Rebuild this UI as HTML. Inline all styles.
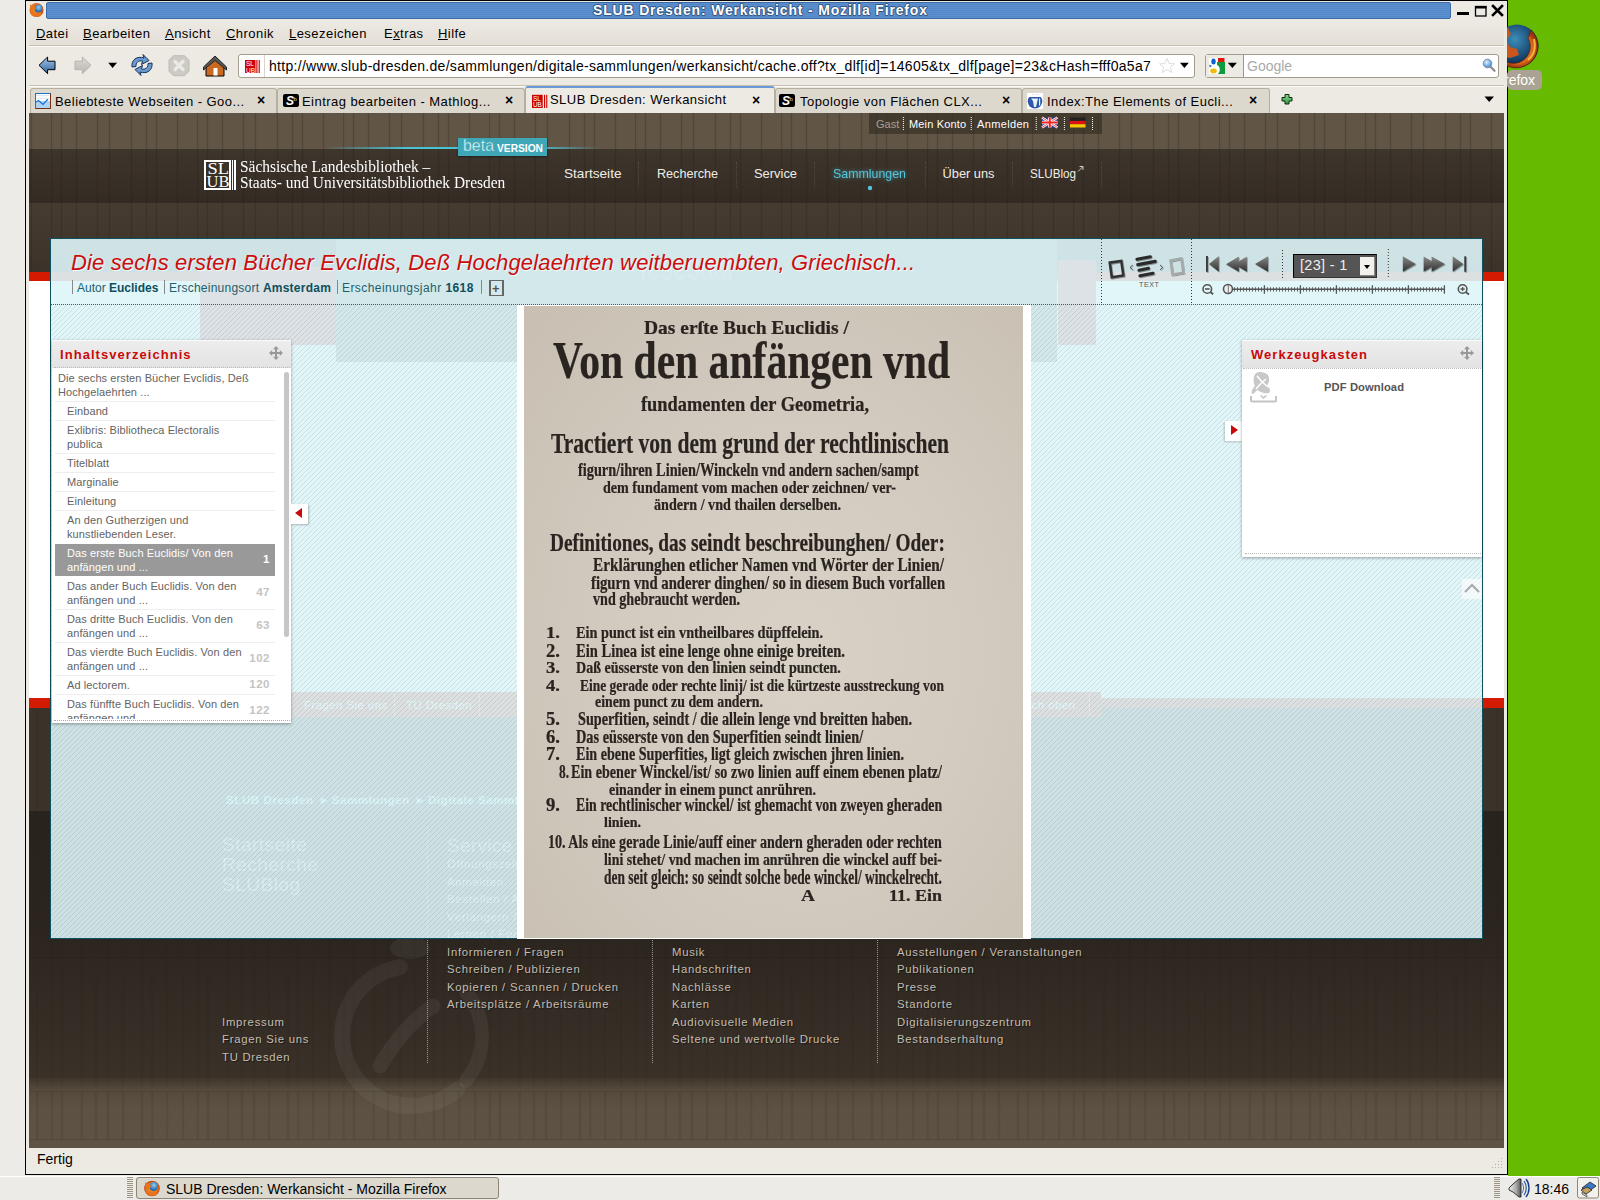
<!DOCTYPE html>
<html><head><meta charset="utf-8">
<style>
*{margin:0;padding:0;box-sizing:border-box}
html,body{width:1600px;height:1200px;overflow:hidden;background:#edebe7;font-family:"Liberation Sans",sans-serif}
.a{position:absolute}
.ui{font-size:14px;color:#000;white-space:nowrap}
#green{left:1508px;top:0;width:92px;height:1176px;background:#66ba00}
#win{left:25px;top:0;width:1483px;height:1175px;background:#edeae4;border:1px solid #000;border-width:1px 1px 1px 1px}
#title{left:46px;top:2px;width:1405px;height:17px;border-radius:2px;border:1px solid #3c6aa5;
 background:repeating-linear-gradient(180deg,#5d8fcf 0,#5d8fcf 1px,#5289c9 1px,#5289c9 2px)}
#titletext{left:0;top:1px;width:1405px;text-align:center;color:#fff;font-weight:bold;font-size:14px;letter-spacing:0.6px;text-shadow:0 0 2px #1e3a60}
.sep{height:2px;background:#c9c0b0;border-bottom:1px solid #fbfaf8}
.tab{top:88px;height:25px;background:#ddd8ce;border:1px solid #b6ae9f;border-bottom:none;border-radius:3px 3px 0 0}
.tabtxt{top:4.8px;left:24px;font-size:13px;letter-spacing:0.45px;white-space:nowrap}
.tabx{top:3px;font-size:14px;font-weight:bold}
#content{left:29px;top:113px;width:1475px;height:1035px;overflow:hidden;background:#3f362c}
.wood{background-image:
 linear-gradient(90deg,transparent -0.8px,rgba(35,28,20,.26) 0.5px,transparent 1.8px),
 linear-gradient(90deg,transparent 9.2px,rgba(35,28,20,.26) 10.5px,transparent 11.8px),
 linear-gradient(90deg,transparent 24.2px,rgba(35,28,20,.26) 25.5px,transparent 26.8px),
 linear-gradient(90deg,transparent 45.2px,rgba(35,28,20,.26) 46.5px,transparent 47.8px),
 linear-gradient(90deg,transparent 57.2px,rgba(35,28,20,.26) 58.5px,transparent 59.8px),
 linear-gradient(90deg,transparent 79.2px,rgba(35,28,20,.26) 80.5px,transparent 81.8px),
 linear-gradient(90deg,transparent 94.2px,rgba(35,28,20,.26) 95.5px,transparent 96.8px),
 linear-gradient(90deg,transparent 104.2px,rgba(35,28,20,.26) 105.5px,transparent 106.8px),
 linear-gradient(90deg,transparent 125.2px,rgba(35,28,20,.26) 126.5px,transparent 127.8px);
 background-size:146px 100%;background-position:22px 0}
#status{left:29px;top:1148px;width:1475px;height:24px}
#taskbar{left:0;top:1176px;width:1600px;height:24px;background:#edebe7;border-top:1px solid #fff}

.serif{font-family:"Liberation Serif",serif}
.um{top:117.5px;font-size:11px;color:#fff;white-space:nowrap}
.nav{top:165px;font-size:13.4px;color:#f2efe8;white-space:nowrap;letter-spacing:0.2px}
.dsep{top:162px;height:26px;width:1px;border-left:1px dotted rgba(255,255,255,.12)}
.fcol{font-size:11.3px;line-height:17.55px;color:#c4bdb2;letter-spacing:0.75px;white-space:nowrap;text-shadow:1px 1px 1px rgba(0,0,0,.5)}
.fsep{top:827px;height:236px;width:1px;border-left:1px dotted rgba(255,255,255,.5)}

.metat{top:281.4px;font-size:12px;color:#1d5f6e;white-space:nowrap}
.metat b{color:#0f4f5e}
.panel{background:#fff;box-shadow:0 1px 3px rgba(0,0,0,.35)}
.phead{background:linear-gradient(#ededed,#e3e3e3);border-top:1px solid #fafafa}
.ptitle{font-size:13px;font-weight:bold;color:#c80a0a;letter-spacing:1.05px;white-space:nowrap}
.bl{position:absolute;white-space:pre;line-height:1;color:#2a2420;-webkit-text-stroke:0.2px #2a2420;transform-origin:0 0;font-family:"Liberation Serif",serif}

.li{font-size:11px;line-height:14px;color:#636363;letter-spacing:0.1px;white-space:nowrap}
.lsep{left:55px;width:220px;height:1px;background:#eee}
.lnum{left:54px;width:216px;text-align:right;font-size:11.5px;font-weight:bold;color:#c4c4c4;letter-spacing:0.5px}
.fm{top:699px;font-size:11.5px;color:#fff;white-space:nowrap;letter-spacing:0.4px}
.bleed{position:absolute;left:40px;width:440px;text-align:right;font-family:"Liberation Serif",serif;font-weight:bold;font-size:17px;color:rgba(60,50,40,.05);white-space:nowrap;transform:scaleX(-1)}
.wood2{background-image:
 linear-gradient(90deg,transparent -0.8px,rgba(35,28,20,.26) 0.5px,transparent 1.8px),
 linear-gradient(90deg,transparent 14.0px,rgba(35,28,20,.26) 15.3px,transparent 16.6px),
 linear-gradient(90deg,transparent 24.3px,rgba(35,28,20,.26) 25.6px,transparent 26.9px),
 linear-gradient(90deg,transparent 44.0px,rgba(35,28,20,.26) 45.3px,transparent 46.6px),
 linear-gradient(90deg,transparent 58.1px,rgba(35,28,20,.26) 59.4px,transparent 60.7px),
 linear-gradient(90deg,transparent 70.3px,rgba(35,28,20,.26) 71.6px,transparent 72.9px),
 linear-gradient(90deg,transparent 85.3px,rgba(35,28,20,.26) 86.6px,transparent 87.9px),
 linear-gradient(90deg,transparent 104.1px,rgba(35,28,20,.26) 105.4px,transparent 106.7px),
 linear-gradient(90deg,transparent 114.4px,rgba(35,28,20,.26) 115.7px,transparent 117.0px),
 linear-gradient(90deg,transparent 129.4px,rgba(35,28,20,.26) 130.7px,transparent 132.0px);
 background-size:146px 100%;background-position:7.5px 0}
</style></head><body>
<div id="green" class="a"></div>
<div id="win" class="a"></div>
<!-- title bar -->
<div id="title" class="a"></div><svg class="a" style="left:0;top:0" width="1600" height="22"><text x="593" y="15" font-family="Liberation Sans" font-weight="bold" font-size="14" fill="#fff" textLength="334" lengthAdjust="spacing" stroke="#2a4c78" stroke-width="1.6" paint-order="stroke" stroke-linejoin="round">SLUB Dresden: Werkansicht - Mozilla Firefox</text></svg>

<!-- menu -->
<div class="a" style="left:29px;top:20px;width:1475px;height:25px;background:linear-gradient(#edeae4,#e4dfd7)"></div>
<div class="a ui" style="left:36px;top:25.8px;font-size:13px;letter-spacing:0.45px"><u>D</u>atei</div>
<div class="a ui" style="left:83px;top:25.8px;font-size:13px;letter-spacing:0.45px"><u>B</u>earbeiten</div>
<div class="a ui" style="left:165px;top:25.8px;font-size:13px;letter-spacing:0.45px"><u>A</u>nsicht</div>
<div class="a ui" style="left:226px;top:25.8px;font-size:13px;letter-spacing:0.45px"><u>C</u>hronik</div>
<div class="a ui" style="left:289px;top:25.8px;font-size:13px;letter-spacing:0.45px"><u>L</u>esezeichen</div>
<div class="a ui" style="left:384px;top:25.8px;font-size:13px;letter-spacing:0.45px">E<u>x</u>tras</div>
<div class="a ui" style="left:438px;top:25.8px;font-size:13px;letter-spacing:0.45px"><u>H</u>ilfe</div>
<div class="a sep" style="left:29px;top:45px;width:1475px"></div>

<!-- nav toolbar -->
<div class="a" style="left:238px;top:54px;width:957px;height:24px;background:#fff;border:1px solid #a39c8e;border-radius:3px"></div>
<div class="a ui" style="left:269px;top:58px;width:886px;overflow:hidden;letter-spacing:0.3px">http://www.slub-dresden.de/sammlungen/digitale-sammlungen/werkansicht/cache.off?tx_dlf[id]=14605&amp;tx_dlf[page]=23&amp;cHash=fff0a5a7</div>
<div class="a" style="left:1205px;top:54px;width:294px;height:24px;background:#fff;border:1px solid #a39c8e;border-radius:3px"></div>
<div class="a ui" style="left:1247px;top:58px;color:#aaa">Google</div>
<div class="a sep" style="left:29px;top:85px;width:1475px"></div>

<!-- tabs -->
<div class="a tab" style="left:30px;width:247px"><div class="a tabtxt">Beliebteste Webseiten - Goo...</div><div class="a tabx" style="left:226px">×</div></div>
<div class="a tab" style="left:277px;width:248px"><div class="a tabtxt">Eintrag bearbeiten - Mathlog...</div><div class="a tabx" style="left:227px">×</div></div>
<div class="a tab" style="left:525px;top:86px;height:27px;width:250px;background:#edeae4;border-top:2px solid #6a9bd8"><div class="a tabtxt" style="top:3.8px">SLUB Dresden: Werkansicht</div><div class="a tabx" style="left:226px;top:4px">×</div></div>
<div class="a tab" style="left:775px;width:247px"><div class="a tabtxt">Topologie von Flächen CLX...</div><div class="a tabx" style="left:226px">×</div></div>
<div class="a tab" style="left:1022px;width:248px"><div class="a tabtxt">Index:The Elements of Eucli...</div><div class="a tabx" style="left:226px">×</div></div>


<svg class="a" style="left:0;top:0" width="1600" height="120">
 <defs>
  <linearGradient id="gBack" x1="0" y1="0" x2="0" y2="1"><stop offset="0" stop-color="#a9c6e8"/><stop offset=".5" stop-color="#6a95c6"/><stop offset="1" stop-color="#2f5e96"/></linearGradient>
  <linearGradient id="gFwd" x1="0" y1="0" x2="0" y2="1"><stop offset="0" stop-color="#dcdad5"/><stop offset="1" stop-color="#b9b6b0"/></linearGradient>
  <linearGradient id="gPlus" x1="0" y1="0" x2="0" y2="1"><stop offset="0" stop-color="#8fd48f"/><stop offset="1" stop-color="#2f9a3f"/></linearGradient>
  <radialGradient id="gFox" cx=".45" cy=".45" r=".6"><stop offset="0" stop-color="#f6b23a"/><stop offset=".7" stop-color="#e0651a"/><stop offset="1" stop-color="#b33c10"/></radialGradient>
  <radialGradient id="gGlobe" cx=".55" cy=".35" r=".6"><stop offset="0" stop-color="#8fd0f0"/><stop offset="1" stop-color="#1d5fa8"/></radialGradient>
  <radialGradient id="gMag" cx=".4" cy=".35" r=".6"><stop offset="0" stop-color="#dff0ff"/><stop offset="1" stop-color="#4f8fd8"/></radialGradient>
 </defs>
 <!-- title firefox icon -->
 <circle cx="36.5" cy="10" r="7" fill="url(#gFox)"/>
 <circle cx="38.3" cy="8.6" r="4" fill="url(#gGlobe)"/>
 <path d="M30 4 L32 6 L35 5 L36 9 L33 12 L37 14 L41 12 L41 16 L36 17 L31 15 Z" fill="#e8741c" opacity=".9"/>
 <!-- window buttons -->
 <rect x="1457" y="12" width="12" height="3" fill="#000"/>
 <rect x="1475.5" y="6.5" width="10.5" height="9.5" fill="none" stroke="#000" stroke-width="1.3"/>
 <rect x="1475" y="6" width="11.5" height="2.5" fill="#000"/>
 <path d="M1493 6 L1502 15 M1502 6 L1493 15" stroke="#000" stroke-width="2.6" stroke-linecap="square"/>
 <!-- back -->
 <path d="M39 65.3 L47.6 57 L47.6 61.2 L55 61.2 L55 69.7 L47.6 69.7 L47.6 73.7 Z" fill="url(#gBack)" stroke="#000" stroke-width="1" stroke-linejoin="miter"/>
 <!-- forward -->
 <path d="M91 65.3 L82.4 57 L82.4 61.2 L75 61.2 L75 69.7 L82.4 69.7 L82.4 73.7 Z" fill="url(#gFwd)" stroke="#b5b2ac" stroke-width="1"/>
 <path d="M108.2 62.8 L117 62.8 L112.6 68.1 Z" fill="#000"/>
 <!-- reload -->
 <g fill="#6b9ad0" stroke="#14335a" stroke-width="1">
  <path d="M132 67 C131 60 137 55.5 144 58 L143 54.5 L149 60.5 L141.5 64.5 L142.5 61 C139 60 135.5 62.5 136 66.5 Z"/>
  <path d="M152 63 C153 70 147 74.5 140 72 L141 75.5 L135 69.5 L142.5 65.5 L141.5 69 C145 70 148.5 67.5 148 63.5 Z"/>
 </g>
 <!-- stop -->
 <path d="M173.5 55.7 L184.5 55.7 L189 60.2 L189 71.2 L184.5 75.7 L173.5 75.7 L169 71.2 L169 60.2 Z" fill="#cdcac4" stroke="#bdbab4" stroke-width="1"/>
 <path d="M175 61.5 L183 69.5 M183 61.5 L175 69.5" stroke="#eceae6" stroke-width="3.2" stroke-linecap="round"/>
 <!-- home -->
 <path d="M206 66 L206 76 L224 76 L224 66 L215 58 Z" fill="#c96a22" stroke="#000" stroke-width="1"/>
 <path d="M203.5 67 L215 56 L226.5 67 L226.5 70 L215 60.5 L203.5 70 Z" fill="#555" stroke="#222" stroke-width="1"/>
 <rect x="213.5" y="68" width="4" height="7.5" fill="#fff"/>
 <!-- url favicon -->
 <rect x="245" y="60" width="10.5" height="13" fill="#cc0000"/>
 <text x="246" y="66" font-family="Liberation Sans" font-size="6.5" fill="#fff">SL</text>
 <text x="246" y="72.5" font-family="Liberation Sans" font-size="6.5" fill="#fff">UB</text>
 <rect x="256.3" y="60" width="1.2" height="13" fill="#cc0000"/>
 <rect x="258.6" y="60" width="1.2" height="13" fill="#cc0000"/>
 <rect x="264" y="55" width="1" height="22" fill="#d8d4cc"/>
 <!-- star -->
 <path d="M1167 58.5 L1169.2 63.5 L1174.5 63.8 L1170.4 67.2 L1171.8 72.5 L1167 69.6 L1162.2 72.5 L1163.6 67.2 L1159.5 63.8 L1164.8 63.5 Z" fill="none" stroke="#ddd" stroke-width="1"/>
 <path d="M1180 62.8 L1188.8 62.8 L1184.4 68.1 Z" fill="#000"/>
 <!-- search engine -->
 <rect x="1206" y="55" width="37.5" height="22" fill="#edeae4"/>
 <rect x="1243" y="55" width="1" height="22" fill="#9d968a"/>
 <rect x="1209" y="58" width="16" height="16" fill="#fff"/>
 <ellipse cx="1213.5" cy="61.5" rx="2.2" ry="3" fill="#0f5fd0"/>
 <path d="M1218 58 L1224.5 58 L1224.5 62 L1218 62 Z" fill="#e3120b"/>
 <path d="M1217 62 L1225 62 L1225 74 L1218 74 C1221 71 1220 66 1217 65 Z" fill="#0f9a3c"/>
 <ellipse cx="1213.5" cy="71" rx="3.3" ry="2.4" fill="#f2b90f"/>
 <path d="M1209.5 64.5 L1212 66 L1209.5 67.5 Z" fill="#2a5bbf"/>
 <path d="M1227.8 62.8 L1236.9 62.8 L1232.35 68.1 Z" fill="#000"/>
 <circle cx="1487.5" cy="63.5" r="4.3" fill="url(#gMag)" stroke="#7c8fa3" stroke-width="1"/>
 <path d="M1490.5 66.8 L1494.5 70.8" stroke="#8a8a8a" stroke-width="2.2" stroke-linecap="round"/>
 <!-- tab favicons -->
 <rect x="35.5" y="93.5" width="15" height="15" fill="#fff" stroke="#1a73c8" stroke-width="1"/>
 <rect x="36" y="101" width="14" height="7" fill="#a9d4f5"/>
 <path d="M50.5 93.5 L50.5 108.5 L35.5 108.5" fill="none" stroke="#7a2d10" stroke-width="1"/>
 <path d="M36 102 L38.5 100.5 L43 104.5 L48 99" fill="none" stroke="#1a73c8" stroke-width="1.2"/>
 <path d="M36.5 95.5 L49.5 95.5 M36.5 98.5 L49.5 98.5" stroke="#dbeaf8" stroke-width="1"/>
 <rect x="283" y="94" width="16" height="13" rx="2" fill="#000"/>
 <text x="286" y="105" font-family="Liberation Sans" font-style="italic" font-weight="bold" font-size="12" fill="#fff">S</text>
 <text x="293.5" y="100.5" font-family="Liberation Sans" font-size="6" fill="#ddd">b</text>
 <rect x="779" y="94" width="16" height="13" rx="2" fill="#000"/>
 <text x="782" y="105" font-family="Liberation Sans" font-style="italic" font-weight="bold" font-size="12" fill="#fff">S</text>
 <text x="789.5" y="100.5" font-family="Liberation Sans" font-size="6" fill="#ddd">b</text>
 <rect x="532" y="94.8" width="10.7" height="13.2" fill="#cc0000"/>
 <text x="533" y="101" font-family="Liberation Sans" font-size="6.3" fill="#fff">SL</text>
 <text x="533" y="107.3" font-family="Liberation Sans" font-size="6.3" fill="#fff">UB</text>
 <rect x="544" y="94.8" width="1.1" height="13.2" fill="#cc0000"/>
 <rect x="546.2" y="94.8" width="1.1" height="13.2" fill="#cc0000"/>
 <rect x="1027" y="93" width="16" height="16" fill="#fff"/>
 <circle cx="1035" cy="101.3" r="7.3" fill="#2f58a8"/>
 <path d="M1028 97 C1031 93 1039 93 1042 97 Z" fill="#fff"/>
 <path d="M1031 98.5 L1038 98.5 L1036 107 L1034 107 L1033 101 Z" fill="#e8f2fa"/>
 <rect x="1039" y="98.5" width="1.2" height="7" fill="#e8f2fa"/>
 <!-- new tab plus and list -->
 <path d="M1285 94.5 L1289 94.5 L1289 97.5 L1292 97.5 L1292 101 L1289 101 L1289 104 L1285 104 L1285 101 L1282 101 L1282 97.5 L1285 97.5 Z" fill="url(#gPlus)" stroke="#0f2a10" stroke-width="1"/>
 <path d="M1484.5 96.5 L1494 96.5 L1489.2 102 Z" fill="#000"/>
</svg>

<!-- content -->

<div id="site" class="a" style="left:0;top:0;width:1600px;height:1200px;clip-path:inset(113px 96px 52px 29px)">
 <!-- wood bands -->
 <div class="a wood" style="left:29px;top:113px;width:1475px;height:36px;background-color:#615646"></div>
 <div class="a" style="left:29px;top:149px;width:1475px;height:54px;background:linear-gradient(#3e352c,#342c24)"></div><div class="a wood" style="left:29px;top:149px;width:1475px;height:54px"></div>
 <div class="a" style="left:29px;top:203px;width:1475px;height:69px;background:linear-gradient(#463c31,#3b3229)"></div><div class="a wood" style="left:29px;top:203px;width:1475px;height:69px"></div>
 <!-- underlying page body -->
 <div class="a" style="left:29px;top:272px;width:1475px;height:9px;background:#d41a00"></div>
 <div class="a" style="left:29px;top:281px;width:1475px;height:417px;background:#fff"></div>
 <div class="a" style="left:29px;top:698px;width:1475px;height:10px;background:#d41a00"></div>
 <div class="a" style="left:29px;top:708px;width:1475px;height:103px;background:#3b3229"></div>
 <div class="a" style="left:29px;top:811px;width:1475px;height:267px;background:linear-gradient(180deg,#29231d 0,#2c251f 45%,#3a3229 100%)"></div>
 <div class="a wood2" style="left:29px;top:708px;width:1475px;height:370px;opacity:.6"></div>
 <div class="a" style="left:29px;top:1078px;width:1475px;height:70px;background:linear-gradient(#3f362c,#554a3c 12px,#5c5142 30px,#5e5344)"></div><div class="a wood2" style="left:29px;top:1078px;width:1475px;height:8px;opacity:.5"></div><div class="a wood2" style="left:29px;top:1091px;width:1475px;height:49px;opacity:.7"></div>

 <!-- user menu -->
 <div class="a" style="left:869px;top:113px;width:233px;height:21px;background:rgba(45,38,30,.55)"></div>
 <div class="a um" style="left:876px;color:#a8a093">Gast</div>
 <div class="a um" style="left:909px;letter-spacing:0.15px">Mein Konto</div>
 <div class="a um" style="left:977px;letter-spacing:0.35px">Anmelden</div>
 <svg class="a" style="left:860px;top:112px" width="250" height="26">
  <path d="M43.4 5 L43.4 18 M111.25 5 L111.25 18 M176.25 5 L176.25 18 M204.4 5 L204.4 18 M232.5 5 L232.5 18" stroke="#fff" stroke-width="1" stroke-dasharray="1 1"/>
  <rect x="182" y="5.5" width="15.5" height="10" fill="#2a3e9a"/>
  <path d="M182 5.5 L197.5 15.5 M197.5 5.5 L182 15.5" stroke="#fff" stroke-width="2.4"/>
  <path d="M182 5.5 L197.5 15.5 M197.5 5.5 L182 15.5" stroke="#d22" stroke-width="0.8"/>
  <path d="M189.75 5.5 L189.75 15.5 M182 10.5 L197.5 10.5" stroke="#fff" stroke-width="3.5"/>
  <path d="M189.75 5.5 L189.75 15.5 M182 10.5 L197.5 10.5" stroke="#e22" stroke-width="2"/>
  <rect x="210" y="5.5" width="15.5" height="3.4" fill="#222"/>
  <rect x="210" y="8.9" width="15.5" height="3.3" fill="#dd1111"/>
  <rect x="210" y="12.2" width="15.5" height="3.3" fill="#f5c800"/>
 </svg>


 <!-- beta line & badge -->
 <div class="a" style="left:325px;top:147px;width:275px;height:1.5px;background:linear-gradient(90deg,rgba(60,190,210,0),#4ac3d6 30%,#4ac3d6 75%,rgba(60,190,210,0))"></div>
 <div class="a" style="left:458px;top:138px;width:89px;height:18px;background:#3fa7b6;box-shadow:0 1px 2px rgba(0,0,0,.4)"></div>
 <svg class="a" style="left:458px;top:136px" width="92" height="22"><text x="5" y="15" font-family="Liberation Sans" font-size="16.5" fill="#eaf7f9" stroke="#3fa7b6" stroke-width="0.35" textLength="31" lengthAdjust="spacingAndGlyphs">beta</text><text x="39" y="15.6" font-family="Liberation Sans" font-weight="bold" font-size="10.8" fill="#fff" textLength="46" lengthAdjust="spacingAndGlyphs">VERSION</text></svg>

 <!-- logo -->
 <div class="a" style="left:204px;top:159.5px;width:27px;height:30px;border:2px solid #fff"></div>
 <div class="a" style="left:232px;top:159.5px;width:1.2px;height:30px;background:#fff"></div>
 <div class="a" style="left:234.4px;top:159.5px;width:1.2px;height:30px;background:#fff"></div>
 <svg class="a" style="left:200px;top:155px" width="40" height="40"><text x="7.5" y="18.8" font-family="Liberation Serif" font-size="16.5" fill="#fff" textLength="21.5" lengthAdjust="spacingAndGlyphs">SL</text><text x="6.5" y="31.5" font-family="Liberation Serif" font-size="16.5" fill="#fff" textLength="23" lengthAdjust="spacingAndGlyphs">UB</text></svg>
 <div class="a serif" style="left:240px;top:159.3px;font-size:16.6px;line-height:16px;color:#fff;white-space:nowrap;transform:scaleX(.93);transform-origin:0 0">Sächsische Landesbibliothek –<br>Staats- und Universitätsbibliothek Dresden</div>
 <!-- nav -->
 <svg class="a" style="left:550px;top:150px" width="560" height="50">
  <g font-family="Liberation Sans" font-size="13.6" fill="#f0ede6">
   <text x="14" y="28" textLength="57.5" lengthAdjust="spacingAndGlyphs">Startseite</text>
   <text x="107" y="28" textLength="61" lengthAdjust="spacingAndGlyphs">Recherche</text>
   <text x="204" y="28" textLength="43" lengthAdjust="spacingAndGlyphs">Service</text>
   <text x="283" y="28" textLength="73" lengthAdjust="spacingAndGlyphs" fill="#52c6dc" style="filter:drop-shadow(0 0 2px rgba(80,200,230,.6))">Sammlungen</text>
   <text x="392.5" y="28" textLength="52" lengthAdjust="spacingAndGlyphs">Über uns</text>
   <text x="480" y="28" textLength="46" lengthAdjust="spacingAndGlyphs">SLUBlog</text>
  </g>
  <path d="M528 21.5 L533 16.5 M529.5 16.5 L533 16.5 L533 20" stroke="#ddd" stroke-width="0.9" fill="none"/>
  <circle cx="320" cy="38" r="2.2" fill="#52c6dc"/>
 </svg>
 <div class="a dsep" style="left:638px"></div>
 <div class="a dsep" style="left:736px"></div>
 <div class="a dsep" style="left:814px"></div>
 <div class="a dsep" style="left:925px"></div>
 <div class="a dsep" style="left:1012px"></div>
 <div class="a dsep" style="left:1101px"></div>

 <!-- footer -->
 <!-- underlying header images (mostly hidden behind overlay) -->
 <div class="a" style="left:336px;top:238px;width:721px;height:124px;background:#6d6a66"></div>
 <div class="a" style="left:200px;top:267px;width:136px;height:78px;background:#c9302a"></div>
 <div class="a" style="left:1058px;top:260px;width:38px;height:85px;background:#c9302a"></div>
  <div class="a" style="left:640px;top:244px;font-size:40px;font-weight:bold;color:#fff;transform:scaleX(.6);transform-origin:0 0;opacity:.25">lesesaal</div>
 <!-- footer menu bar -->
 <div class="a" style="left:200px;top:692px;width:901px;height:25px;background:#c41a00"></div>
 <div class="a fm" style="left:304px">Fragen Sie uns</div>
 <div class="a fm" style="left:406px">TU Dresden</div>
 <div class="a fm" style="left:1018px">nach oben</div>
 <div class="a" style="left:394px;top:694px;height:21px;border-left:1px dotted #fff"></div>
 <div class="a" style="left:479px;top:694px;height:21px;border-left:1px dotted #fff"></div>
 <div class="a" style="left:1089px;top:694px;height:21px;border-left:1px dotted #fff"></div>
 <!-- breadcrumb -->
 <div class="a" style="left:226px;top:793px;font-size:11.5px;font-weight:bold;color:#a8e6f0;letter-spacing:0.6px;white-space:nowrap">SLUB Dresden &nbsp;▸ Sammlungen &nbsp;▸ Digitale Sammlungen</div>
 <svg class="a" style="left:300px;top:900px" width="240" height="240">
  <g fill="none" stroke="rgba(255,255,255,.05)" stroke-linecap="round">
   <path d="M 99.8 67.1 A 70 70 0 1 0 157 189.6" stroke-width="16"/>
   <path d="M 165.6 91 A 70 70 0 0 1 165.6 181" stroke-width="14"/>
   <path d="M 80 166 C 95 140 115 118 133 106" stroke-width="15"/>
  </g>
  <ellipse cx="110" cy="48" rx="20" ry="11" fill="rgba(255,255,255,.05)"/>
 </svg>
 <!-- footer block pattern -->
 <div class="a" style="left:29px;top:1091px;width:1475px;height:1px;background:rgba(30,24,18,.15)"></div>
 <div class="a" style="left:29px;top:1139px;width:1475px;height:1px;background:rgba(30,24,18,.15)"></div>
 <div class="a" style="left:29px;top:957px;width:1475px;height:1px;background:rgba(20,16,12,.18)"></div>
 <div class="a" style="left:222px;top:834.5px;font-size:19px;line-height:20px;color:#a89f92;white-space:nowrap;letter-spacing:0.5px">Startseite<br>Recherche<br>SLUBlog</div>
 <div class="a fcol" style="left:222px;top:1013.5px">Impressum<br>Fragen Sie uns<br>TU Dresden</div>
 <div class="a" style="left:447px;top:834.5px;font-size:19px;color:#a89f92;white-space:nowrap;letter-spacing:0.3px">Service</div>
 <div class="a fcol" style="left:447px;top:856px">Öffnungszeiten<br>Anmelden<br>Bestellen / Ausleihen<br>Verlängern / Vormerken<br>Lernen / Forschen<br>Informieren / Fragen<br>Schreiben / Publizieren<br>Kopieren / Scannen / Drucken<br>Arbeitsplätze / Arbeitsräume</div>
 <div class="a" style="left:672px;top:834.5px;font-size:19px;color:#a89f92;white-space:nowrap;letter-spacing:0.3px">Sammlungen</div>
 <div class="a fcol" style="left:672px;top:856px">Digitale Sammlungen<br>Bücher<br>Zeitschriften<br>Zeitungen<br>Noten<br>Musik<br>Handschriften<br>Nachlässe<br>Karten<br>Audiovisuelle Medien<br>Seltene und wertvolle Drucke</div>
 <div class="a" style="left:897px;top:834.5px;font-size:19px;color:#a89f92;white-space:nowrap;letter-spacing:0.3px">Über uns</div>
 <div class="a fcol" style="left:897px;top:856px">Kontakt<br>Organisation<br>Projekte<br>Jobs<br>Förderer<br>Ausstellungen / Veranstaltungen<br>Publikationen<br>Presse<br>Standorte<br>Digitalisierungszentrum<br>Bestandserhaltung</div>
 <div class="a fsep" style="left:427px"></div>
 <div class="a fsep" style="left:652px"></div>
 <div class="a fsep" style="left:877px"></div>
</div>

<!-- OVERLAY -->
<div class="a" style="left:50px;top:238px;width:1433px;height:701px;border:1px solid #0f5060;background:rgba(222,245,248,.905)"></div>
<svg class="a" style="left:51px;top:305px" width="1431" height="633"><defs><pattern id="pStripe" x="1" y="0" width="5" height="5" patternUnits="userSpaceOnUse"><g fill="rgba(15,25,28,.105)"><rect x="0" y="4" width="1" height="1"/><rect x="1" y="3" width="1" height="1"/><rect x="2" y="2" width="1" height="1"/><rect x="3" y="1" width="1" height="1"/><rect x="4" y="0" width="1" height="1"/></g></pattern></defs><rect width="1431" height="633" fill="url(#pStripe)" shape-rendering="crispEdges"/></svg>
<div class="a" style="left:51px;top:304px;width:1431px;height:1px;border-top:1px dotted #1f6677"></div>
<svg class="a" style="left:1100px;top:239px" width="100" height="66"><path d="M1.5 0 L1.5 66 M91.5 0 L91.5 66" stroke="#333" stroke-width="1" stroke-dasharray="1 2"/></svg>
<div class="a" style="left:71px;top:250.3px;font-size:22px;letter-spacing:0.14px;font-style:italic;color:#cc0d0d;white-space:nowrap;text-shadow:1px 1px 1px rgba(255,255,255,.8)">Die sechs ersten Bücher Evclidis, Deß Hochgelaehrten weitberuembten, Griechisch...</div>
<div class="a meta" style="left:72px;top:280px;width:1px;height:14px;background:#888"></div>
<div class="a metat" style="left:77px">Autor <b>Euclides</b></div>
<div class="a meta" style="left:164px;top:280px;width:1px;height:14px;background:#888"></div>
<div class="a metat" style="left:169px;letter-spacing:0.24px">Erscheinungsort <b>Amsterdam</b></div>
<div class="a meta" style="left:337px;top:280px;width:1px;height:14px;background:#888"></div>
<div class="a metat" style="left:342px;letter-spacing:0.43px">Erscheinungsjahr <b>1618</b></div>
<div class="a meta" style="left:481px;top:280px;width:1px;height:14px;background:#888"></div>
<div class="a" style="left:489px;top:280px;width:15px;height:16px;border:1px solid #666;border-left-width:2px;border-right-width:2px"></div>
<div class="a" style="left:492px;top:281px;font-size:13px;font-weight:bold;color:#555">+</div>


<svg class="a" style="left:1100px;top:240px" width="382" height="64" viewBox="1100 240 382 64">
 <defs>
  <linearGradient id="gTri" x1="0" y1="0" x2="0" y2="1"><stop offset="0" stop-color="#8a8a8a"/><stop offset="1" stop-color="#2e2e2e"/></linearGradient>
  <filter id="fsh" x="-20%" y="-20%" width="150%" height="150%"><feDropShadow dx="0.8" dy="1" stdDeviation="0.7" flood-color="#000" flood-opacity=".35"/></filter>
 </defs>
 <g filter="url(#fsh)">
 <path d="M1109.8 262.6 L1121.3 260.9 L1123.4 275.5 L1111.8 277.2 Z" fill="none" stroke="#333" stroke-width="2.6"/>
 <path d="M1132.8 265 L1130 267.4 L1132.8 269.8" fill="none" stroke="#444" stroke-width="0.9"/>
 <path d="M1137 259.3 L1150.3 256.8 M1137.8 264.6 L1155.2 261.4 M1139 270.2 L1148.4 268.3 M1140 275.7 L1153 273.3" stroke="#2a2a2a" stroke-width="3.2" stroke-linecap="round"/>
 <path d="M1160 265 L1162.8 267.4 L1160 269.8" fill="none" stroke="#444" stroke-width="0.9"/>
 <path d="M1170.5 260.3 L1181.3 258.3 L1183.3 272.5 L1172.4 274.4 Z" fill="none" stroke="#a3a8a8" stroke-width="2.2"/>
 <rect x="1206" y="256" width="1.9" height="15.8" fill="#3a3a3a"/>
 <path d="M1209 264 L1218.8 256 L1218.8 271.8 Z" fill="url(#gTri)"/>
 <path d="M1226 264.3 L1238.8 256.6 L1238.8 271.8 Z" fill="url(#gTri)"/>
 <path d="M1234 264.3 L1246.9 256.6 L1246.9 271.8 Z" fill="url(#gTri)"/>
 <path d="M1255 264.1 L1268 256.2 L1268 271.8 Z" fill="url(#gTri)"/>
 <path d="M1415.9 264.1 L1402.8 256.3 L1402.8 271.8 Z" fill="url(#gTri)"/>
 <path d="M1437 264.1 L1423.6 256.5 L1423.6 271.8 Z" fill="url(#gTri)"/>
 <path d="M1445 264.1 L1431.6 256.5 L1431.6 271.8 Z" fill="url(#gTri)"/>
 <path d="M1463.4 264.1 L1452.7 256.3 L1452.7 271.8 Z" fill="url(#gTri)"/>
 <rect x="1464.3" y="256.3" width="1.9" height="15.5" fill="#3a3a3a"/>
 </g>
 <text x="1139" y="287.3" font-family="Liberation Sans" font-size="7.2" fill="#555" letter-spacing="0.5">TEXT</text>
 <path d="M1282.5 250 L1282.5 279 M1388.3 249 L1388.3 278" stroke="#333" stroke-width="1" stroke-dasharray="1 2"/>
 <g stroke="#555" fill="none">
  <path d="M1232 289.3 L1445 289.3" stroke-width="1.4"/>
  <path d="M1234.5 287.2 L1234.5 291.6 M1237.5 287.2 L1237.5 291.6 M1240.5 287.2 L1240.5 291.6 M1243.5 287.2 L1243.5 291.6 M1246.5 287.2 L1246.5 291.6 M1249.5 287.2 L1249.5 291.6 M1252.5 287.2 L1252.5 291.6 M1255.5 287.2 L1255.5 291.6 M1258.5 287.2 L1258.5 291.6 M1261.5 287.2 L1261.5 291.6 M1267.5 287.2 L1267.5 291.6 M1270.5 287.2 L1270.5 291.6 M1273.5 287.2 L1273.5 291.6 M1276.5 287.2 L1276.5 291.6 M1279.5 287.2 L1279.5 291.6 M1282.5 287.2 L1282.5 291.6 M1285.5 287.2 L1285.5 291.6 M1288.5 287.2 L1288.5 291.6 M1291.5 287.2 L1291.5 291.6 M1294.5 287.2 L1294.5 291.6 M1297.5 287.2 L1297.5 291.6 M1303.5 287.2 L1303.5 291.6 M1306.5 287.2 L1306.5 291.6 M1309.5 287.2 L1309.5 291.6 M1312.5 287.2 L1312.5 291.6 M1315.5 287.2 L1315.5 291.6 M1318.5 287.2 L1318.5 291.6 M1321.5 287.2 L1321.5 291.6 M1324.5 287.2 L1324.5 291.6 M1327.5 287.2 L1327.5 291.6 M1330.5 287.2 L1330.5 291.6 M1333.5 287.2 L1333.5 291.6 M1339.5 287.2 L1339.5 291.6 M1342.5 287.2 L1342.5 291.6 M1345.5 287.2 L1345.5 291.6 M1348.5 287.2 L1348.5 291.6 M1351.5 287.2 L1351.5 291.6 M1354.5 287.2 L1354.5 291.6 M1357.5 287.2 L1357.5 291.6 M1360.5 287.2 L1360.5 291.6 M1363.5 287.2 L1363.5 291.6 M1366.5 287.2 L1366.5 291.6 M1369.5 287.2 L1369.5 291.6 M1375.5 287.2 L1375.5 291.6 M1378.5 287.2 L1378.5 291.6 M1381.5 287.2 L1381.5 291.6 M1384.5 287.2 L1384.5 291.6 M1387.5 287.2 L1387.5 291.6 M1390.5 287.2 L1390.5 291.6 M1393.5 287.2 L1393.5 291.6 M1396.5 287.2 L1396.5 291.6 M1399.5 287.2 L1399.5 291.6 M1402.5 287.2 L1402.5 291.6 M1405.5 287.2 L1405.5 291.6 M1411.5 287.2 L1411.5 291.6 M1414.5 287.2 L1414.5 291.6 M1417.5 287.2 L1417.5 291.6 M1420.5 287.2 L1420.5 291.6 M1423.5 287.2 L1423.5 291.6 M1426.5 287.2 L1426.5 291.6 M1429.5 287.2 L1429.5 291.6 M1432.5 287.2 L1432.5 291.6 M1435.5 287.2 L1435.5 291.6 M1438.5 287.2 L1438.5 291.6 M1441.5 287.2 L1441.5 291.6" stroke-width="0.9"/>
  <path d="M1264.4 285.3 L1264.4 293.8 M1300.4 285.3 L1300.4 293.8 M1336.4 285.3 L1336.4 293.8 M1372.4 285.3 L1372.4 293.8 M1408.4 285.3 L1408.4 293.8 M1444.4 285.3 L1444.4 293.8" stroke-width="1.3"/>
  <circle cx="1207.3" cy="289" r="4.3" stroke-width="1.6"/>
  <path d="M1205 289 L1209.6 289" stroke-width="1.6"/>
  <path d="M1210.3 292 L1213.2 294.2" stroke-width="2"/>
  <circle cx="1228" cy="289" r="4.5" stroke-width="1.6" fill="#eee"/>
  <path d="M1228.3 285 L1228.3 293" stroke-width="0.8"/>
  <circle cx="1462.6" cy="289" r="4.3" stroke-width="1.6"/>
  <path d="M1460.5 289 L1464.7 289 M1462.6 287 L1462.6 291" stroke-width="1.3"/>
  <path d="M1465.6 292 L1469 294.5" stroke-width="2"/>
 </g>
</svg>

<!-- page select -->
<div class="a" style="left:1293px;top:254px;width:84px;height:24px;background:#555;border:1px solid #000;border-right-color:#333;border-bottom-color:#333"></div>
<div class="a" style="left:1300px;top:257px;font-size:14.5px;color:#eee;white-space:nowrap;letter-spacing:0.3px">[23] - 1</div>
<div class="a" style="left:1360px;top:257px;width:15px;height:19px;background:#f3f1ec;border-right:1px solid #888;border-bottom:1px solid #888"></div>
<div class="a" style="left:1364px;top:264.5px;width:0;height:0;border-style:solid;border-width:4.5px 3.8px 0 3.8px;border-color:#000 transparent transparent transparent"></div>

<!-- book page frame -->
<div class="a" style="left:517px;top:305px;width:514px;height:634px;background:#fff"></div>
<div class="a" id="book" style="left:524px;top:306px;width:499px;height:632px;background:radial-gradient(ellipse at 55% 55%,#d8d1c6 0,#d3cbc0 45%,#c8bfb2 100%);overflow:hidden">
<div class="bl" style="left:120px;top:12.9px;font-size:16.6px;font-weight:bold;transform:scaleX(1.176) scaleY(1.18)">Das erſte Buch Euclidis /</div>
<div class="bl" style="left:29px;top:29.8px;font-size:44.2px;font-weight:bold;transform:scaleX(0.941) scaleY(1.18)">Von den anfängen vnd</div>
<div class="bl" style="left:117px;top:86.5px;font-size:18.4px;font-weight:bold;transform:scaleX(1.000) scaleY(1.18)">fundamenten der Geometria,</div>
<div class="bl" style="left:27px;top:123.0px;font-size:24.8px;font-weight:bold;transform:scaleX(0.869) scaleY(1.18)">Tractiert von dem grund der rechtlinischen</div>
<div class="bl" style="left:54px;top:154.9px;font-size:16.6px;font-weight:bold;transform:scaleX(0.863) scaleY(1.18)">figurn/ihren Linien/Winckeln vnd andern sachen/sampt</div>
<div class="bl" style="left:79px;top:173.3px;font-size:14.7px;font-weight:bold;transform:scaleX(0.960) scaleY(1.18)">dem fundament vom machen oder zeichnen/ ver-</div>
<div class="bl" style="left:130px;top:190.3px;font-size:14.7px;font-weight:bold;transform:scaleX(0.961) scaleY(1.18)">ändern / vnd thailen derselben.</div>
<div class="bl" style="left:26px;top:224.8px;font-size:21.2px;font-weight:bold;transform:scaleX(0.911) scaleY(1.18)">Definitiones, das seindt beschreibunghen/ Oder:</div>
<div class="bl" style="left:69px;top:250.1px;font-size:15.6px;font-weight:bold;transform:scaleX(0.977) scaleY(1.18)">Erklärunghen etlicher Namen vnd Wörter der Linien/</div>
<div class="bl" style="left:67px;top:268.1px;font-size:15.6px;font-weight:bold;transform:scaleX(0.943) scaleY(1.18)">figurn vnd anderer dinghen/ so in diesem Buch vorfallen</div>
<div class="bl" style="left:69px;top:284.1px;font-size:15.6px;font-weight:bold;transform:scaleX(0.905) scaleY(1.18)">vnd ghebraucht werden.</div>
<div class="bl" style="left:22px;top:318.3px;font-size:14.7px;font-weight:bold;transform:scaleX(1.271) scaleY(1.18)">1.</div>
<div class="bl" style="left:52px;top:318.3px;font-size:14.7px;font-weight:bold;transform:scaleX(0.971) scaleY(1.18)">Ein punct ist ein vntheilbares düpffelein.</div>
<div class="bl" style="left:22px;top:336.1px;font-size:15.6px;font-weight:bold;transform:scaleX(1.196) scaleY(1.18)">2.</div>
<div class="bl" style="left:52px;top:336.1px;font-size:15.6px;font-weight:bold;transform:scaleX(0.933) scaleY(1.18)">Ein Linea ist eine lenge ohne einige breiten.</div>
<div class="bl" style="left:22px;top:353.3px;font-size:14.7px;font-weight:bold;transform:scaleX(1.271) scaleY(1.18)">3.</div>
<div class="bl" style="left:52px;top:353.3px;font-size:14.7px;font-weight:bold;transform:scaleX(0.956) scaleY(1.18)">Daß eüsserste von den linien seindt puncten.</div>
<div class="bl" style="left:22px;top:371.3px;font-size:14.7px;font-weight:bold;transform:scaleX(1.271) scaleY(1.18)">4.</div>
<div class="bl" style="left:56px;top:371.3px;font-size:14.7px;font-weight:bold;transform:scaleX(0.915) scaleY(1.18)">Eine gerade oder rechte linij/ ist die kürtzeste ausstreckung von</div>
<div class="bl" style="left:71px;top:387.5px;font-size:13.8px;font-weight:bold;transform:scaleX(1.003) scaleY(1.18)">einem punct zu dem andern.</div>
<div class="bl" style="left:22px;top:404.1px;font-size:15.6px;font-weight:bold;transform:scaleX(1.196) scaleY(1.18)">5.</div>
<div class="bl" style="left:54px;top:404.1px;font-size:15.6px;font-weight:bold;transform:scaleX(0.910) scaleY(1.18)">Superfitien, seindt / die allein lenge vnd breitten haben.</div>
<div class="bl" style="left:22px;top:422.1px;font-size:15.6px;font-weight:bold;transform:scaleX(1.196) scaleY(1.18)">6.</div>
<div class="bl" style="left:52px;top:422.1px;font-size:15.6px;font-weight:bold;transform:scaleX(0.918) scaleY(1.18)">Das eüsserste von den Superfitien seindt linien/</div>
<div class="bl" style="left:22px;top:438.9px;font-size:16.6px;font-weight:bold;transform:scaleX(1.124) scaleY(1.18)">7.</div>
<div class="bl" style="left:52px;top:438.9px;font-size:16.6px;font-weight:bold;transform:scaleX(0.851) scaleY(1.18)">Ein ebene Superfities, ligt gleich zwischen jhren linien.</div>
<div class="bl" style="left:35px;top:456.9px;font-size:16.6px;font-weight:bold;transform:scaleX(0.803) scaleY(1.18)">8.</div>
<div class="bl" style="left:47px;top:456.9px;font-size:16.6px;font-weight:bold;transform:scaleX(0.850) scaleY(1.18)">Ein ebener Winckel/ist/ so zwo linien auff einem ebenen platz/</div>
<div class="bl" style="left:85px;top:475.3px;font-size:14.7px;font-weight:bold;transform:scaleX(0.947) scaleY(1.18)">einander in einem punct anrühren.</div>
<div class="bl" style="left:22px;top:489.9px;font-size:16.6px;font-weight:bold;transform:scaleX(1.124) scaleY(1.18)">9.</div>
<div class="bl" style="left:52px;top:489.9px;font-size:16.6px;font-weight:bold;transform:scaleX(0.833) scaleY(1.18)">Ein rechtlinischer winckel/ ist ghemacht von zweyen gheraden</div>
<div class="bl" style="left:80px;top:508.7px;font-size:12.9px;font-weight:bold;transform:scaleX(1.087) scaleY(1.18)">linien.</div>
<div class="bl" style="left:24px;top:527.1px;font-size:15.6px;font-weight:bold;transform:scaleX(0.902) scaleY(1.18)">10. Als eine gerade Linie/auff einer andern gheraden oder rechten</div>
<div class="bl" style="left:80px;top:545.3px;font-size:14.7px;font-weight:bold;transform:scaleX(0.943) scaleY(1.18)">lini stehet/ vnd machen im anrühren die winckel auff bei-</div>
<div class="bl" style="left:80px;top:560.7px;font-size:17.5px;font-weight:bold;transform:scaleX(0.767) scaleY(1.18)">den seit gleich: so seindt solche bede winckel/ winckelrecht.</div>
<div class="bl" style="left:277px;top:581.3px;font-size:14.7px;font-weight:bold;transform:scaleX(1.320) scaleY(1.18)">A</div>
<div class="bl" style="left:365px;top:581.3px;font-size:14.7px;font-weight:bold;transform:scaleX(1.225) scaleY(1.18)">11. Ein</div>
</div>

<!-- left panel -->
<div class="a panel" style="left:52px;top:340px;width:239px;height:383px"></div>
<div class="a phead" style="left:52px;top:340px;width:239px;height:28px"></div>
<div class="a ptitle" style="left:60px;top:347px">Inhaltsverzeichnis</div>
<svg class="a" style="left:269px;top:346px" width="14" height="14"><g fill="#999"><path d="M7 0 L10 3.2 L8 3.2 L8 6 L10.8 6 L10.8 4 L14 7 L10.8 10 L10.8 8 L8 8 L8 10.8 L10 10.8 L7 14 L4 10.8 L6 10.8 L6 8 L3.2 8 L3.2 10 L0 7 L3.2 4 L3.2 6 L6 6 L6 3.2 L4 3.2 Z"/></g></svg>
<div class="a" style="left:54px;top:367px;width:236px;height:1px;border-top:1px dotted #bbb"></div>
<div class="a" style="left:54px;top:720px;width:236px;height:1px;border-top:1px dotted #aaa"></div>


<div class="a li" style="left:58px;top:371px">Die sechs ersten Bücher Evclidis, Deß<br>Hochgelaehrten ...</div>
<div class="a lsep" style="top:401px"></div>
<div class="a li" style="left:67px;top:404px">Einband</div>
<div class="a lsep" style="top:420px"></div>
<div class="a li" style="left:67px;top:423px">Exlibris: Bibliotheca Electoralis<br>publica</div>
<div class="a lsep" style="top:453px"></div>
<div class="a li" style="left:67px;top:456px">Titelblatt</div>
<div class="a lsep" style="top:472px"></div>
<div class="a li" style="left:67px;top:475px">Marginalie</div>
<div class="a lsep" style="top:491px"></div>
<div class="a li" style="left:67px;top:494px">Einleitung</div>
<div class="a lsep" style="top:510px"></div>
<div class="a li" style="left:67px;top:513px">An den Gutherzigen und<br>kunstliebenden Leser.</div>
<div class="a" style="left:55px;top:544px;width:220px;height:32px;background:#999"></div>
<div class="a li" style="left:67px;top:546px;color:#fff">Das erste Buch Euclidis/ Von den<br>anfängen und ...</div>
<div class="a lnum" style="top:553px;color:#fff">1</div>
<div class="a li" style="left:67px;top:579px">Das ander Buch Euclidis. Von den<br>anfängen und ...</div>
<div class="a lnum" style="top:586px">47</div>
<div class="a lsep" style="top:609px"></div>
<div class="a li" style="left:67px;top:612px">Das dritte Buch Euclidis. Von den<br>anfängen und ...</div>
<div class="a lnum" style="top:619px">63</div>
<div class="a lsep" style="top:642px"></div>
<div class="a li" style="left:67px;top:645px">Das vierdte Buch Euclidis. Von den<br>anfängen und ...</div>
<div class="a lnum" style="top:652px">102</div>
<div class="a lsep" style="top:675px"></div>
<div class="a li" style="left:67px;top:678px">Ad lectorem.</div>
<div class="a lnum" style="top:678px">120</div>
<div class="a lsep" style="top:694px"></div>
<div class="a" style="left:54px;top:697px;width:236px;height:22px;overflow:hidden"><div class="a li" style="left:13px;top:0px">Das fünffte Buch Euclidis. Von den<br>anfängen und ...</div><div class="a lnum" style="left:0;top:7px;width:216px">122</div></div>
<div class="a" style="left:284px;top:372px;width:5px;height:265px;border-radius:3px;background:#c6c6c6"></div>
<!-- collapse tabs -->
<div class="a" style="left:291px;top:504px;width:17px;height:20px;background:#fff;box-shadow:1px 1px 2px rgba(0,0,0,.25)"></div>
<div class="a" style="left:295px;top:508px;width:0;height:0;border-style:solid;border-width:5.5px 7px 5.5px 0;border-color:transparent #c80a0a transparent transparent"></div>
<div class="a" style="left:1225px;top:421px;width:17px;height:20px;background:#fff;box-shadow:-1px 1px 2px rgba(0,0,0,.2)"></div>
<div class="a" style="left:1231px;top:425px;width:0;height:0;border-style:solid;border-width:5.5px 0 5.5px 7px;border-color:transparent transparent transparent #c80a0a"></div>
<div class="a" style="left:1462px;top:579px;width:20px;height:20px;background:rgba(255,255,255,.6)"></div>
<svg class="a" style="left:1462px;top:579px" width="20" height="20"><path d="M3 13 L10 6 L17 13" fill="none" stroke="#aaa" stroke-width="2.2"/></svg>

<!-- right panel -->
<div class="a panel" style="left:1242px;top:340px;width:240px;height:217px"></div>
<div class="a phead" style="left:1242px;top:340px;width:240px;height:28px"></div>
<div class="a ptitle" style="left:1251px;top:347px">Werkzeugkasten</div>
<div class="a" style="left:1243px;top:368px;width:238px;height:1px;border-top:1px dotted #bbb"></div>
<div class="a" style="left:1245px;top:553px;width:236px;height:1px;border-top:1px dotted #bbb"></div>
<div class="a" style="left:1324px;top:380.5px;font-size:11.2px;font-weight:bold;color:#555;white-space:nowrap;letter-spacing:0.1px">PDF Download</div>
<svg class="a" style="left:1248px;top:370px" width="34" height="34">
 <g fill="#c8c8c8">
  <path d="M8 3 C11 1 17 2 20 5 C22 9 21 13 19 16 C22 18 23 21 21 23 C17 24 12 22 9 20 C7 22 6 24 4 24 C3 21 5 18 7 16 C5 12 5 6 8 3 Z"/>
 </g>
 <path d="M9 6 C12 10 15 13 20 17 M8 19 C11 15 13 13 18 9" stroke="#fff" stroke-width="1.4" fill="none"/>
 <path d="M3 26 L3 30.5 Q3 31.5 4 31.5 L27 31.5 Q28 31.5 28 30.5 L28 26" stroke="#c4c4c4" stroke-width="2" fill="none"/>
 <path d="M12.5 25.5 L15.5 28 L18.5 25.5" stroke="#c4c4c4" stroke-width="1.6" fill="none"/>
</svg>
<svg class="a" style="left:1460px;top:346px" width="14" height="14"><g fill="#999"><path d="M7 0 L10 3.2 L8 3.2 L8 6 L10.8 6 L10.8 4 L14 7 L10.8 10 L10.8 8 L8 8 L8 10.8 L10 10.8 L7 14 L4 10.8 L6 10.8 L6 8 L3.2 8 L3.2 10 L0 7 L3.2 4 L3.2 6 L6 6 L6 3.2 L4 3.2 Z"/></g></svg>

<!-- status -->
<div class="a ui" style="left:37px;top:1151px">Fertig</div>

<!-- taskbar -->
<div id="taskbar" class="a"></div>
<div class="a" style="left:136px;top:1177px;width:363px;height:22px;background:#ddd8ce;border:1px solid #8d8576;border-radius:3px"></div>
<div class="a ui" style="left:166px;top:1181px">SLUB Dresden: Werkansicht - Mozilla Firefox</div>
<div class="a ui" style="left:1534px;top:1181px">18:46</div>

<!-- desktop icon -->
<svg class="a" style="left:1507px;top:0" width="93" height="100">
 <defs>
  <radialGradient id="gDF" cx=".5" cy=".5" r=".5"><stop offset="0" stop-color="#f4a83a"/><stop offset=".75" stop-color="#d9661a"/><stop offset="1" stop-color="#9a3410"/></radialGradient>
  <radialGradient id="gDG" cx=".45" cy=".35" r=".6"><stop offset="0" stop-color="#3b8fb8"/><stop offset="1" stop-color="#0b2a55"/></radialGradient>
 </defs>
 <circle cx="10" cy="46" r="21.5" fill="url(#gDG)"/>
 <path d="M 24 30 A 20 20 0 0 1 -6 62 L -8 55 A 14 14 0 0 0 21 38 Z" fill="url(#gDF)" stroke="#3a1a05" stroke-width="0.6"/>
 <path d="M 27 39 C 29 47 27 55 21 60" stroke="#f3b03a" stroke-width="2" fill="none"/>
 <path d="M-6 31 L1 28 L4 34 L-1 40 L3 47 L10 49 L12 55 L3 58 L-6 56 Z" fill="#c9561b"/>
 <rect x="0" y="70" width="35" height="20" rx="5" fill="#aaa294"/>
 <text x="-3" y="84.5" font-family="Liberation Sans" font-size="14" fill="#fff">refox</text>
</svg>

<!-- taskbar details -->
<svg class="a" style="left:0;top:1140px" width="1600" height="60">
 <defs>
  <radialGradient id="gTF" cx=".5" cy=".5" r=".5"><stop offset="0" stop-color="#f7b640"/><stop offset=".8" stop-color="#e06a1a"/><stop offset="1" stop-color="#b0400f"/></radialGradient>
  <radialGradient id="gTG" cx=".55" cy=".35" r=".6"><stop offset="0" stop-color="#8fd0f0"/><stop offset="1" stop-color="#1d5fa8"/></radialGradient>
  <linearGradient id="gSpk" x1="0" y1="0" x2="1" y2="0"><stop offset="0" stop-color="#eee"/><stop offset=".6" stop-color="#aaa"/><stop offset="1" stop-color="#555"/></linearGradient>
 </defs>
 <g fill="#9d9585">
  <rect x="127" y="37" width="6" height="1"/><rect x="127" y="39" width="6" height="1"/><rect x="127" y="41" width="6" height="1"/><rect x="127" y="43" width="6" height="1"/>
  <rect x="127" y="45" width="6" height="1"/><rect x="127" y="47" width="6" height="1"/><rect x="127" y="49" width="6" height="1"/><rect x="127" y="51" width="6" height="1"/>
  <rect x="127" y="53" width="6" height="1"/><rect x="127" y="55" width="6" height="1"/><rect x="127" y="57" width="6" height="1"/>
  <rect x="1494" y="37" width="6" height="1"/><rect x="1494" y="39" width="6" height="1"/><rect x="1494" y="41" width="6" height="1"/><rect x="1494" y="43" width="6" height="1"/>
  <rect x="1494" y="45" width="6" height="1"/><rect x="1494" y="47" width="6" height="1"/><rect x="1494" y="49" width="6" height="1"/><rect x="1494" y="51" width="6" height="1"/>
  <rect x="1494" y="53" width="6" height="1"/><rect x="1494" y="55" width="6" height="1"/><rect x="1494" y="57" width="6" height="1"/>
 </g>
 <!-- resize grip -->
 <g fill="#b5afa4">
  <rect x="1501" y="18" width="1" height="1"/><rect x="1498" y="21" width="1" height="1"/><rect x="1501" y="21" width="1" height="1"/>
  <rect x="1495" y="24" width="1" height="1"/><rect x="1498" y="24" width="1" height="1"/><rect x="1501" y="24" width="1" height="1"/>
  <rect x="1492" y="27" width="1" height="1"/><rect x="1495" y="27" width="1" height="1"/><rect x="1498" y="27" width="1" height="1"/><rect x="1501" y="27" width="1" height="1"/>
 </g>
 <!-- task firefox -->
 <circle cx="152" cy="48.5" r="7.8" fill="url(#gTF)"/>
 <circle cx="153.5" cy="46.5" r="4.5" fill="url(#gTG)"/>
 <path d="M145 42 L147 44 L150 43 L151 47 L148 50 L152 52 L157 50 L157 55 L151 56 L146 53 Z" fill="#e8741c"/>
 <!-- volume -->
 <path d="M1509 48 L1513 44 L1519 39 L1521 39 L1521 57 L1519 57 L1513 52 L1509 50 Z" fill="url(#gSpk)" stroke="#222" stroke-width="0.9"/>
 <path d="M1522 43 C1524 46 1524 50 1522 53" stroke="#3a6ab8" stroke-width="1" fill="none"/>
 <path d="M1524 41 C1527 45 1527 51 1524 55" stroke="#2255a0" stroke-width="1.2" fill="none"/>
 <path d="M1526 39 C1530 44 1530 52 1526 57" stroke="#163f86" stroke-width="1.4" fill="none"/>
 <!-- network -->
 <rect x="1577.5" y="37.5" width="21" height="20.5" rx="2" fill="#f3f1ec" stroke="#8d8576" stroke-width="1"/>
 <path d="M1582 48 L1590 42 L1596 46 L1588 52 Z" fill="#3b78c8" stroke="#222" stroke-width="0.8"/>
 <path d="M1581 50 L1587 47 L1592 50 L1586 54 Z" fill="#c8a060" stroke="#222" stroke-width="0.8"/>
 <path d="M1582 52 L1587 55 L1587 57 L1582 54 Z" fill="#ccc" stroke="#333" stroke-width="0.6"/>
</svg>
</body></html>
